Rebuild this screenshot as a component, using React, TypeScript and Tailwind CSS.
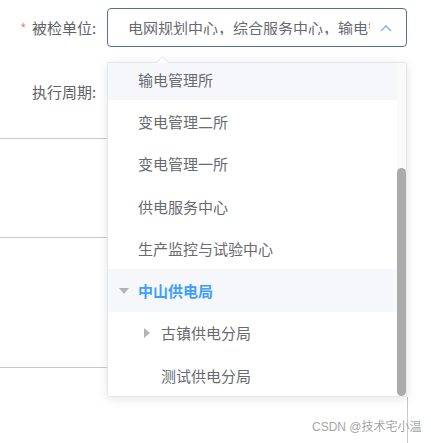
import React from "react";

type Item = { t: string; lvl: 1 | 2; icon?: "down" | "right"; bg?: boolean; active?: boolean };

const items: Item[] = [
  { t: "输电管理所", lvl: 1, bg: true },
  { t: "变电管理二所", lvl: 1 },
  { t: "变电管理一所", lvl: 1 },
  { t: "供电服务中心", lvl: 1 },
  { t: "生产监控与试验中心", lvl: 1 },
  { t: "中山供电局", lvl: 1, icon: "down", bg: true, active: true },
  { t: "古镇供电分局", lvl: 2, icon: "right" },
  { t: "测试供电分局", lvl: 2 },
];

function Row({ it }: { it: Item }) {
  return (
    <div
      className={
        "flex h-[42.3px] shrink-0 items-center " +
        (it.lvl === 1 ? "pl-[6px] " : "pl-[29px] ") +
        (it.bg ? "bg-[#f5f7fa]" : "bg-white")
      }
    >
      <div className="flex h-[20px] w-[20px] items-center justify-center">
        {it.icon === "down" && (
          <svg width="10" height="6" viewBox="0 0 10 6">
            <polygon points="0,0 10,0 5,6" fill="#b0b3b8" />
          </svg>
        )}
        {it.icon === "right" && (
          <svg width="6" height="10" viewBox="0 0 6 10">
            <polygon points="0,0 6,5 0,10" fill="#b0b3b8" />
          </svg>
        )}
      </div>
      <span
        className={
          "ml-[4px] text-[15px] leading-none whitespace-nowrap " +
          (it.active ? "font-bold text-[#409eff]" : "text-[#686a70]")
        }
      >
        {it.t}
      </span>
    </div>
  );
}

export default function App() {
  return (
    <div
      className="relative h-[443px] w-[431px] overflow-hidden bg-white"
      style={{ fontFamily: '"Noto Sans CJK SC", "Noto Sans", sans-serif' }}
    >
      {/* row 1 */}
      <div className="flex pt-[8px]">
        <div className="flex h-[39px] w-[107px] items-center pl-[21px]">
          <span className="w-[11px] text-[12px] leading-none text-[#f56c6c]" style={{ fontFamily: '"Liberation Sans", sans-serif' }}>
            *
          </span>
          <span className="text-[15px] leading-none text-[#606266]">被检单位:</span>
        </div>
        <div className="flex h-[39px] w-[300px] items-center rounded-[4px] border border-[#56718f] pl-[20px]">
          <div className="w-[242px] overflow-hidden whitespace-nowrap text-[15px] leading-none text-[#686a70]">
            电网规划中心，综合服务中心，输电管理所，变电管理二所
          </div>
          <svg className="ml-[10px]" width="12" height="8" viewBox="0 0 12 8">
            <polyline points="1,7 6,2 11,7" fill="none" stroke="#7fb0ea" strokeWidth="1.3" />
          </svg>
        </div>
      </div>

      {/* row 2 */}
      <div className="mt-[29px] flex h-[30px] w-[107px] items-center pl-[32px]">
        <span className="text-[15px] leading-none text-[#606266]">执行周期:</span>
      </div>

      {/* left lines */}
      <div className="mt-[32px] h-px w-[107px] bg-[#c9c9c9]" />
      <div className="mt-[98px] h-px w-[107px] bg-[#c9c9c9]" />
      <div className="mt-[129px] h-px w-[107px] bg-[#c9c9c9]" />

      {/* vertical line bottom */}
      <div className="mt-[29px] ml-[407px] h-[46px] w-px bg-[#c9c9c9]" />

      {/* dropdown */}
      <div className="absolute left-[107px] top-[62px] h-[335px] w-[300px] rounded-[2px] border border-[#e4e7ed] bg-white shadow-[0_2px_12px_rgba(0,0,0,0.1)]">
        <div className="absolute left-[50px] top-[-5px] h-[9px] w-[9px] rotate-45 border-l border-t border-[#e4e7ed] bg-white" />
        <div className="relative h-full w-full overflow-hidden">
          <div className="flex w-[289px] flex-col mt-[-5px]">
            {items.map((it) => (
              <Row key={it.t} it={it} />
            ))}
          </div>
          <div className="absolute right-0 top-0 h-full w-[9px] bg-[#fafafa]" />
          <div className="absolute right-0 top-[105px] bottom-0 w-[9px] rounded-[5px] bg-[#ababab]" />
        </div>
      </div>

      {/* watermark */}
      <div
        className="absolute left-[312px] top-[419px] whitespace-nowrap text-[12px] leading-[16px] text-[#8f8f8f] opacity-80"
        style={{ fontFamily: '"Liberation Sans", "Noto Sans CJK SC", sans-serif' }}
      >
        CSDN @技术宅小温
      </div>
    </div>
  );
}
